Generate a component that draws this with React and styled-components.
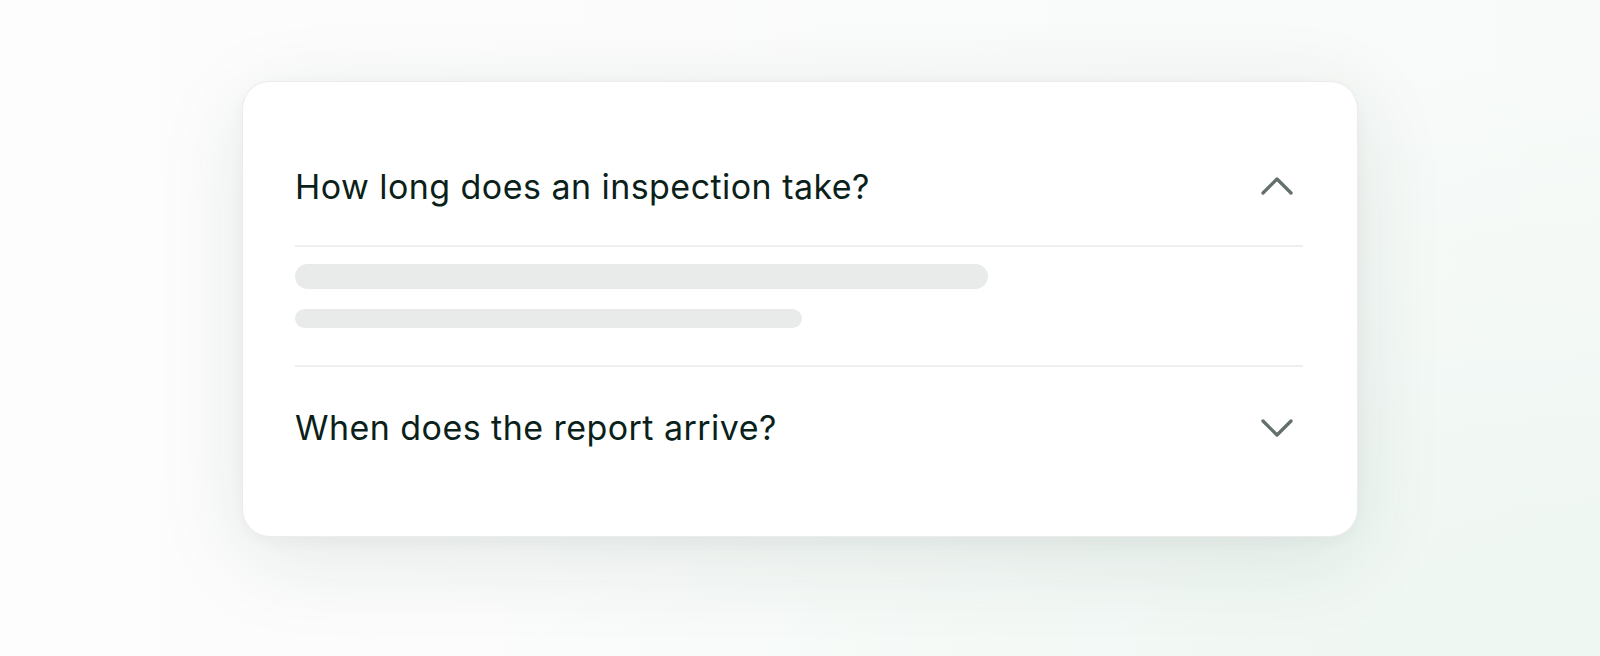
import { useState } from "react";
import styled, { createGlobalStyle } from "styled-components";

const GlobalStyle = createGlobalStyle`
  html, body {
    margin: 0;
    padding: 0;
  }
  body {
    font-family: Inter, "Liberation Sans", sans-serif;
    background: #fbfcfb;
  }
`;

const Page = styled.div`
  width: 1600px;
  height: 656px;
  display: flex;
  justify-content: center;
  padding-top: 81px;
  box-sizing: border-box;
  background: radial-gradient(
      ellipse 70% 90% at 100% 100%,
      #eef7f2 0%,
      rgba(238, 247, 242, 0) 100%
    ),
    linear-gradient(90deg, #fdfdfd 0%, #f7faf8 100%);
`;

const Card = styled.div`
  width: 1116px;
  height: 456px;
  box-sizing: border-box;
  padding: 45px 54px 0 52px;
  background: #fff;
  border: 1.5px solid #ebeceb;
  border-radius: 28px;
  box-shadow: 0 22px 90px rgba(30, 60, 45, 0.1), 0 4px 16px rgba(30, 60, 45, 0.04);
`;

const Item = styled.div`
  display: flex;
  flex-direction: column;
  border-bottom: ${(props) => (props.last ? "none" : "2px solid #eeefee")};
`;

const Header = styled.button`
  display: flex;
  align-items: center;
  justify-content: space-between;
  height: ${(props) => props.h}px;
  padding: 0 10px 0 0;
  border: none;
  background: none;
  cursor: pointer;
  text-align: left;
`;

const Question = styled.span`
  font-family: Inter, "Liberation Sans", sans-serif;
  font-size: 34px;
  font-weight: 400;
  letter-spacing: 0.45px;
  color: #0b1f1b;
`;

const Answer = styled.div`
  display: flex;
  flex-direction: column;
  gap: 20px;
  padding: 17px 0 37px;
  border-top: 2px solid #eeefee;
`;

const Line = styled.div`
  height: ${(props) => props.h}px;
  width: ${(props) => props.w}px;
  border-radius: 999px;
  background: #e9ebea;
`;

function Chevron({ open }) {
  return (
    <svg width="32" height="20" viewBox="0 0 32 20" fill="none">
      <path
        d={open ? "M2 17L16 3L30 17" : "M2 3L16 17L30 3"}
        stroke="#63706d"
        strokeWidth="3.3"
        strokeLinecap="round"
        strokeLinejoin="round"
      />
    </svg>
  );
}

const faqs = [
  { q: "How long does an inspection take?" },
  { q: "When does the report arrive?" },
];

export default function App() {
  const [open, setOpen] = useState(0);

  return (
    <>
      <GlobalStyle />
      <Page>
        <Card>
          {faqs.map((f, i) => (
            <Item key={i} last={i === faqs.length - 1}>
              <Header
                h={i === 0 ? 118 : 121}
                onClick={() => setOpen(open === i ? -1 : i)}
              >
                <Question>{f.q}</Question>
                <Chevron open={open === i} />
              </Header>
              {open === i && (
                <Answer>
                  <Line w={693} h={25} />
                  <Line w={507} h={19} />
                </Answer>
              )}
            </Item>
          ))}
        </Card>
      </Page>
    </>
  );
}
